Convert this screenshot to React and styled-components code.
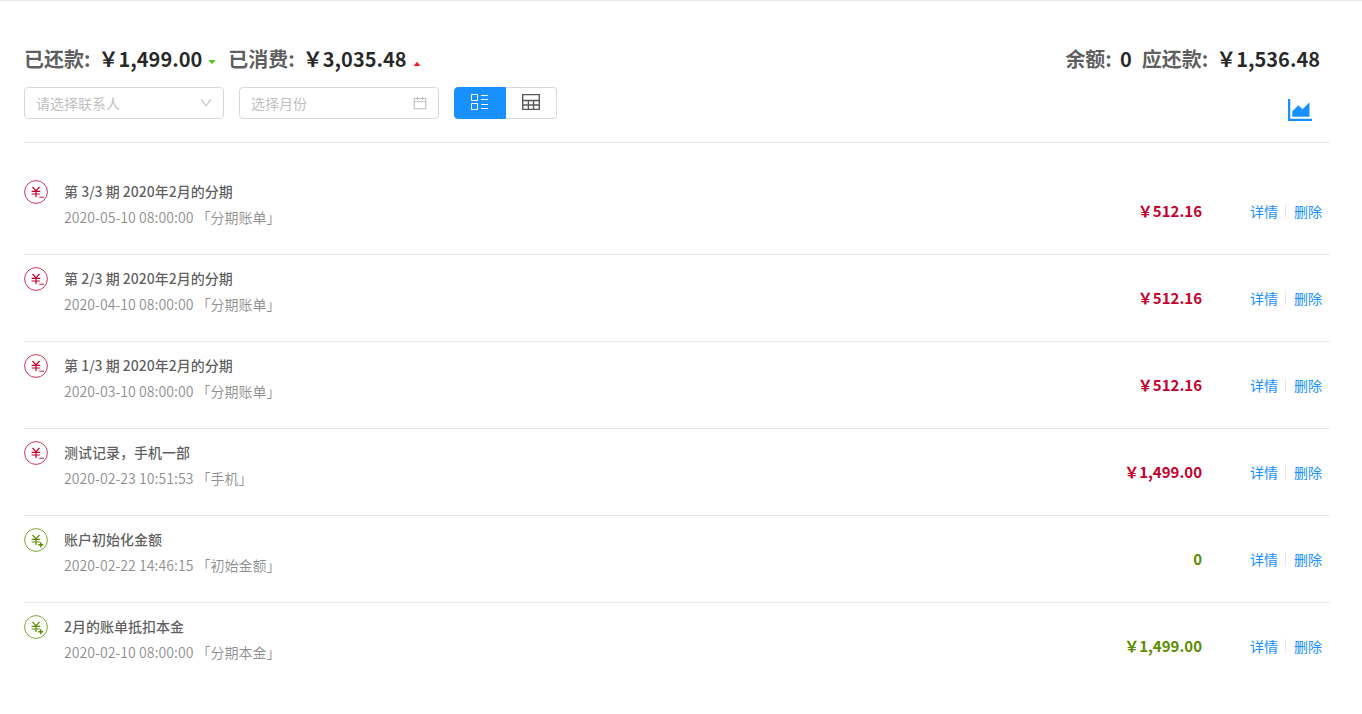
import React, { useState } from 'react'
import styled, { createGlobalStyle } from 'styled-components'
import {
    AiOutlineDown,
    AiOutlineCalendar,
    AiFillCaretDown,
    AiFillCaretUp,
    AiOutlineAreaChart,
} from 'react-icons/ai'


const bills = [
    { id: 1, title: '第 3/3 期 2020年2月的分期', time: '2020-05-10 08:00:00', type: '分期账单', amount: '￥512.16', out: true },
    { id: 2, title: '第 2/3 期 2020年2月的分期', time: '2020-04-10 08:00:00', type: '分期账单', amount: '￥512.16', out: true },
    { id: 3, title: '第 1/3 期 2020年2月的分期', time: '2020-03-10 08:00:00', type: '分期账单', amount: '￥512.16', out: true },
    { id: 4, title: '测试记录，手机一部', time: '2020-02-23 10:51:53', type: '手机', amount: '￥1,499.00', out: true },
    { id: 5, title: '账户初始化金额', time: '2020-02-22 14:46:15', type: '初始金额', amount: '0', out: false },
    { id: 6, title: '2月的账单抵扣本金', time: '2020-02-10 08:00:00', type: '分期本金', amount: '￥1,499.00', out: false },
]

// round yuan badge, minus for spending and plus for income
function YuanIcon({ out }) {
    return (
        <svg width="24" height="24" viewBox="0 0 24 24" fill="none" stroke="currentColor" aria-hidden="true">
            <circle cx="12" cy="12" r="11.4" strokeWidth="0.8" />
            <path d="M8.5 7l3.5 3.8 3.5-3.8M7.6 11.3h8.6M7.6 14h8.2M12 10.8v6.2" strokeWidth="1.2" />
            {out
                ? <path d="M15.2 17.2h4.8" strokeWidth="0.9" />
                : <path d="M14.2 16.7h5M16.7 14.2v5" strokeWidth="1.4" />}
        </svg>
    )
}

function ListIcon() {
    return (
        <svg width="18" height="18" viewBox="0 0 18 18" fill="none" stroke="currentColor" aria-hidden="true">
            <path d="M.5 1.5h6v6h-6zM.5 10.5h6v6h-6zM10 2.5h7M10 6.5h7M10 11.5h7M10 15.5h7" strokeWidth="1" />
        </svg>
    )
}

function TableIcon() {
    return (
        <svg width="18" height="18" viewBox="0 0 18 18" fill="none" stroke="currentColor" aria-hidden="true">
            <path d="M.7 1.6h16.6v14.8H.7zM.7 7.5h16.6M.7 12h16.6M6.4 7.5v9M11.6 7.5v9" strokeWidth="1.4" />
        </svg>
    )
}

function App() {

    const [contact, setContact] = useState('')
    const [month, setMonth] = useState('')
    const [view, setView] = useState('list')

    return (
        <Page>
            <GlobalStyle />
            <Header>
                <Side>
                    <Summary>
                        <Label>已还款:</Label>
                        <Value>￥1,499.00</Value>
                        <Trend $color="#52c41a"><AiFillCaretDown /></Trend>
                        <Label>已消费:</Label>
                        <Value>￥3,035.48</Value>
                        <Trend $color="#f5222d" $up><AiFillCaretUp /></Trend>
                    </Summary>
                    <Filters>
                        <Field>
                            <Select aria-label="请选择联系人" value={contact} onChange={(e) => setContact(e.target.value)}>
                                <option value="">请选择联系人</option>
                            </Select>
                            <AiOutlineDown size={14} />
                        </Field>
                        <Field>
                            <Input
                                aria-label="选择月份"
                                placeholder="选择月份"
                                value={month}
                                onChange={(e) => setMonth(e.target.value)}
                            />
                            <AiOutlineCalendar size={16} />
                        </Field>
                        <Switch>
                            <SwitchButton aria-label="列表" $active={view === 'list'} onClick={() => setView('list')}>
                                <ListIcon />
                            </SwitchButton>
                            <SwitchButton aria-label="表格" $active={view === 'table'} onClick={() => setView('table')}>
                                <TableIcon />
                            </SwitchButton>
                        </Switch>
                    </Filters>
                </Side>
                <RightSide>
                    <Summary>
                        <Label>余额:</Label>
                        <Value>0</Value>
                        <Gap />
                        <Label>应还款:</Label>
                        <Value>￥1,536.48</Value>
                    </Summary>
                    <ChartButton aria-label="图表">
                        <AiOutlineAreaChart size={32} />
                    </ChartButton>
                </RightSide>
            </Header>

            <List>
                {bills.map((bill) => (
                    <Row key={bill.id}>
                        <Badge $out={bill.out}><YuanIcon out={bill.out} /></Badge>
                        <Info>
                            <Title>{bill.title}</Title>
                            <Time>{bill.time} 「{bill.type}」</Time>
                        </Info>
                        <Amount $out={bill.out}>{bill.amount}</Amount>
                        <Actions>
                            <Action href="#detail">详情</Action>
                            <Action href="#delete">删除</Action>
                        </Actions>
                    </Row>
                ))}
            </List>
        </Page>
    )
}

const GlobalStyle = createGlobalStyle`
    body{
        margin: 0;
        background: white;
        color: rgba(0, 0, 0, 0.65);
        font-family: "Noto Sans CJK SC", sans-serif;
        font-size: 14px;
        line-height: 22px;
    }
    *{
        box-sizing: border-box;
    }
    button, input, select{
        font: inherit;
        color: inherit;
    }
`
const Page = styled.main`
    border-top: 1px solid #e8e8e8;
    padding: 40px 32px 24px 24px;
`
const Header = styled.header`
    display: flex;
    justify-content: space-between;
    padding-bottom: 16px;
    border-bottom: 1px solid #e8e8e8;
`
const Side = styled.div`
    display: flex;
    flex-direction: column;
    gap: 10px;
`
const RightSide = styled(Side)`
    align-items: flex-end;
    padding-right: 10px;
`
const Summary = styled.div`
    display: flex;
    align-items: center;
    height: 36px;
    font-size: 20px;
    font-weight: 700;
    line-height: 36px;
    white-space: nowrap;
`
const Label = styled.span`
    margin-right: 8px;
`
const Value = styled.span`
    color: rgba(0, 0, 0, 0.85);
`
const Gap = styled.span`
    width: 10px;
`
const Trend = styled.span`
    display: flex;
    justify-content: center;
    width: 12px;
    margin: 0 10px 0 4px;
    padding-top: ${(props) => (props.$up ? '9px' : '5px')};
    font-size: 10px;
    color: ${(props) => props.$color};
`

const Filters = styled.div`
    display: flex;
    gap: 15px;
`
const Field = styled.label`
    display: flex;
    align-items: center;
    width: 200px;
    height: 32px;
    padding: 0 10px 0 11px;
    border: 1px solid #d9d9d9;
    border-radius: 4px;
    color: #bfbfbf;

    svg{
        flex: none;
    }
`
const Select = styled.select`
    flex: 1;
    min-width: 0;
    padding: 0;
    border: 0;
    outline: 0;
    background: none;
    appearance: none;
`
const Input = styled.input`
    flex: 1;
    min-width: 0;
    padding: 0;
    border: 0;
    outline: 0;
    background: none;

    &::placeholder{
        color: #bfbfbf;
    }
`
const Switch = styled.div`
    display: flex;
`
const SwitchButton = styled.button`
    display: flex;
    justify-content: center;
    width: 52px;
    height: 32px;
    padding: 5px 0 0;
    cursor: pointer;
    border: 1px solid ${(props) => (props.$active ? '#1890ff' : '#d9d9d9')};
    background: ${(props) => (props.$active ? '#1890ff' : 'white')};
    color: ${(props) => (props.$active ? 'white' : 'rgba(0, 0, 0, 0.65)')};

    &:first-child{
        border-radius: 4px 0 0 4px;
    }
    &:last-child{
        width: 51px;
        border-left: 0;
        border-radius: 0 4px 4px 0;
    }
`
const ChartButton = styled.button`
    display: flex;
    padding: 0;
    margin: 7px 4px 0 0;
    border: 0;
    background: none;
    color: #1890ff;
    cursor: pointer;
`

const List = styled.ul`
    list-style: none;
    margin: 25px 0 0;
    padding: 0;
`
const Row = styled.li`
    display: flex;
    align-items: center;
    padding: 12px 0;
    border-bottom: 1px solid #e8e8e8;

    &:last-child{
        border-bottom: 0;
    }
`
const Badge = styled.span`
    display: flex;
    align-self: flex-start;
    margin-right: 16px;
    color: ${(props) => (props.$out ? '#c4002f' : '#5b8c00')};
`
const Info = styled.div`
    flex: 1;
    padding-bottom: 14px;
`
const Title = styled.h4`
    margin: 0 0 4px;
    font-size: 14px;
    font-weight: 500;
`
const Time = styled.div`
    color: rgba(0, 0, 0, 0.45);
`
const Amount = styled.span`
    font-size: 15px;
    font-weight: 700;
    color: ${(props) => (props.$out ? '#c4002f' : '#5b8c00')};
`
const Actions = styled.div`
    display: flex;
    align-items: center;
    margin-left: 40px;
`
const Action = styled.a`
    padding: 0 8px;
    color: #1890ff;
    text-decoration: none;
    line-height: 14px;

    &:first-child{
        padding-right: 7px;
        border-right: 1px solid #e8e8e8;
    }
`
export default App
